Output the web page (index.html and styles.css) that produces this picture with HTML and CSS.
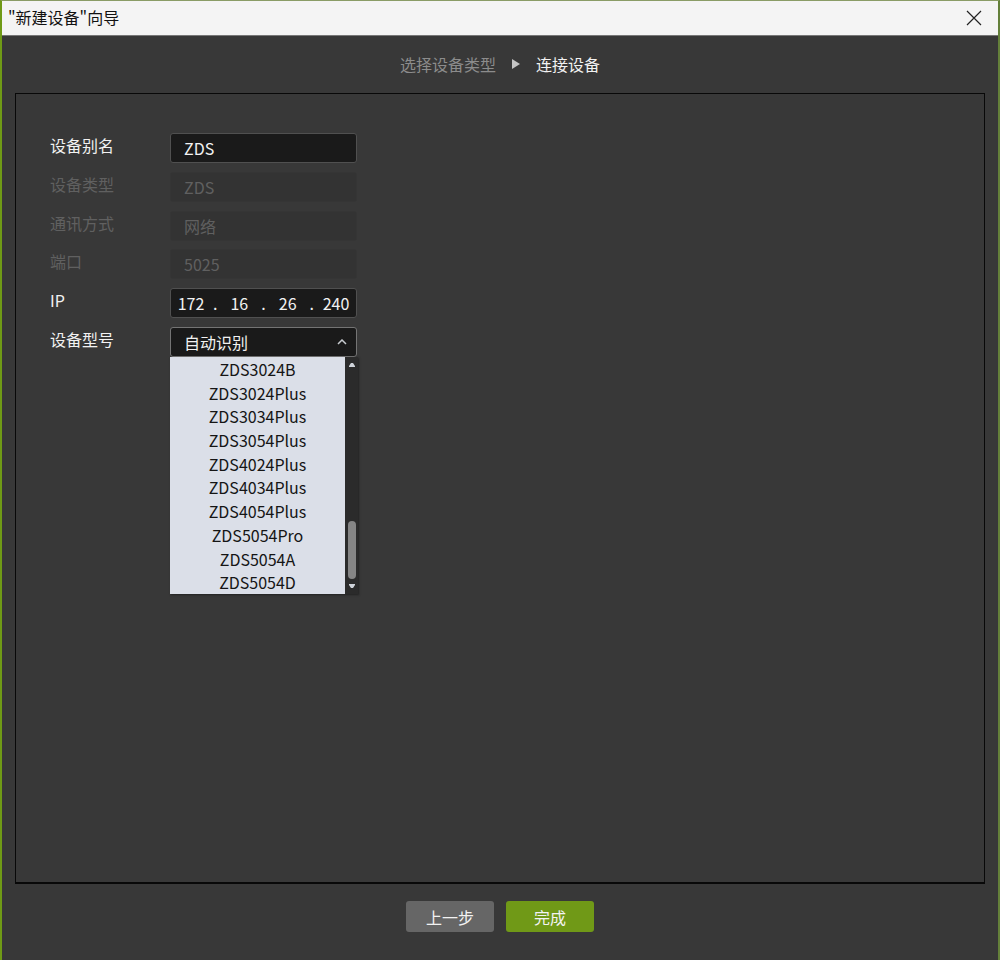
FILE: index.html
```html
<!DOCTYPE html>
<html lang="zh-CN">
<head>
<meta charset="utf-8">
<meta name="viewport" content="width=device-width, initial-scale=1">
<title>"新建设备"向导</title>
<link rel="stylesheet" href="styles.css">
</head>
<body>
<div class="wizard">
  <header class="titlebar">
    <h1 class="title">"新建设备"向导</h1>
    <button class="close" type="button" aria-label="关闭">
      <svg width="16" height="16" viewBox="0 0 16 16" fill="none" stroke="#222" stroke-width="1.2"><path d="M1 1L15 15M15 1L1 15"/></svg>
    </button>
  </header>
  <nav class="steps">
    <span>选择设备类型</span>
    <svg class="step-arrow" width="8" height="12" viewBox="0 0 8 12"><path d="M0 1L8 6L0 11Z" fill="#c4c4c4"/></svg>
    <span class="step-current">连接设备</span>
  </nav>
  <main class="panel">
    <form class="form" id="device-form">
      <div class="row">
        <label for="alias">设备别名</label>
        <input class="field" id="alias" type="text" value="ZDS">
      </div>
      <div class="row row-disabled">
        <label for="type">设备类型</label>
        <input class="field" id="type" type="text" value="ZDS" disabled>
      </div>
      <div class="row row-disabled">
        <label for="mode">通讯方式</label>
        <input class="field" id="mode" type="text" value="网络" disabled>
      </div>
      <div class="row row-disabled">
        <label for="port">端口</label>
        <input class="field" id="port" type="text" value="5025" disabled>
      </div>
      <div class="row">
        <label for="ip1">IP</label>
        <div class="field ip">
          <input id="ip1" type="text" value="172"><span>.</span>
          <input type="text" value="16" aria-label="IP 2"><span>.</span>
          <input type="text" value="26" aria-label="IP 3"><span>.</span>
          <input type="text" value="240" aria-label="IP 4">
        </div>
      </div>
      <div class="row">
        <label for="model">设备型号</label>
        <div class="combo">
          <select class="field field-open" id="model"><option>自动识别</option></select>
          <svg class="chevron" width="10" height="6" viewBox="0 0 10 6" fill="none" stroke="#c8ccd0" stroke-width="1.5"><path d="M1 5L5 1L9 5"/></svg>
          <div class="popup">
            <ul class="options" role="listbox" aria-label="设备型号">
              <li role="option">ZDS3024B</li>
              <li role="option">ZDS3024Plus</li>
              <li role="option">ZDS3034Plus</li>
              <li role="option">ZDS3054Plus</li>
              <li role="option">ZDS4024Plus</li>
              <li role="option">ZDS4034Plus</li>
              <li role="option">ZDS4054Plus</li>
              <li role="option">ZDS5054Pro</li>
              <li role="option">ZDS5054A</li>
              <li role="option">ZDS5054D</li>
            </ul>
            <div class="scrollbar">
              <svg width="6" height="4" viewBox="0 0 6 4"><path d="M0 4V3L2 0H4L6 3V4Z" fill="#cfd3da"/></svg>
              <div class="thumb"></div>
              <svg width="6" height="4" viewBox="0 0 6 4"><path d="M0 0V1L2 4H4L6 1V0Z" fill="#cfd3da"/></svg>
            </div>
          </div>
        </div>
      </div>
    </form>
  </main>
  <footer class="actions">
    <button class="btn" type="button">上一步</button>
    <button class="btn btn-primary" type="submit" form="device-form">完成</button>
  </footer>
</div>
</body>
</html>
```
FILE: styles.css
```css
* {
  box-sizing: border-box;
}

body {
  margin: 0;
  background: #383838;
  color: #f2f2f2;
  font: 16px/24px "Noto Sans CJK SC", sans-serif;
}

input,
select,
button {
  font: inherit;
  color: inherit;
}

.wizard {
  display: flex;
  flex-direction: column;
  min-height: 100vh;
  border: 2px solid #6f9a16;
  border-top: 1px solid #8a9c66;
  border-right-color: #64803a;
  border-bottom: 0;
}

.titlebar {
  display: flex;
  align-items: center;
  justify-content: space-between;
  height: 35px;
  padding: 0 16px 0 6px;
  background: #f4f4f4;
  border-bottom: 1px solid #777;
  color: #111;
}

.title {
  margin: 0;
  padding-bottom: 2px;
  font-size: 16px;
  font-weight: 400;
}

.close {
  display: flex;
  padding: 0;
  border: 0;
  background: none;
}

.steps {
  display: flex;
  align-items: center;
  justify-content: center;
  gap: 16px;
  height: 57px;
  padding-bottom: 2px;
  color: #8c8c8c;
}

.step-current {
  color: #f2f2f2;
}

.panel {
  flex: 1;
  margin: 0 13px;
  padding: 39px 34px;
  border: 1px solid #080808;
  border-bottom-width: 2px;
}

.form {
  display: flex;
  flex-direction: column;
  justify-content: space-between;
  min-height: 224px;
}

.row {
  display: grid;
  grid-template-columns: 120px 187px;
  align-items: start;
}

.row-disabled {
  color: #606060;
}

.field {
  width: 100%;
  height: 30px;
  padding: 0 13px;
  border: 1px solid #505050;
  border-radius: 3px;
  background: #1a1a1a;
}

.field:disabled {
  border-color: #353535;
  background: #333;
}

.ip {
  display: grid;
  grid-template-columns: 28px 1fr 28px 1fr 28px 1fr 28px;
  align-items: center;
  padding: 0 6px;
}

.ip input {
  width: 100%;
  padding: 0;
  border: 0;
  background: none;
  text-align: center;
}

.ip span {
  text-align: center;
}

.combo {
  position: relative;
}

.field-open {
  display: block;
  appearance: none;
  border-color: #747474;
}

.chevron {
  position: absolute;
  top: 12px;
  right: 10px;
  pointer-events: none;
}

.popup {
  position: absolute;
  top: 100%;
  left: 0;
  right: -1px;
  display: flex;
  height: 237px;
  background: #2b2b2b;
  box-shadow: 1px 1px 2px #222;
}

.options {
  flex: 1;
  display: grid;
  grid-auto-rows: 1fr;
  margin: 0;
  padding: 0;
  list-style: none;
  background: #dbdfe8;
  color: #151515;
  text-align: center;
}

.options li {
  min-height: 0;
  line-height: 24px;
}

.scrollbar {
  display: flex;
  flex-direction: column;
  align-items: center;
  gap: 5px;
  width: 13px;
  padding: 6px 0;
}

.thumb {
  width: 8px;
  height: 58px;
  margin-top: auto;
  border-radius: 4px;
  background: #858585;
}

.actions {
  display: flex;
  justify-content: center;
  gap: 12px;
  padding: 17px 0 28px;
}

.btn {
  width: 88px;
  height: 31px;
  padding: 0;
  border: 0;
  border-radius: 3px;
  background: #666;
}

.btn-primary {
  background: #709917;
}
```
